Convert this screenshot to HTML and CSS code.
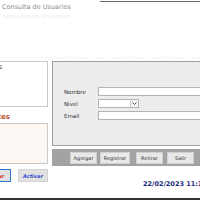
FILE: index.html
```html
<!DOCTYPE html>
<html>
<head>
<meta charset="utf-8">
<link rel="stylesheet" href="styles.css">
</head>
<body>
<div class="window">
  <div class="topline"></div>
  <div class="titlebar">
    <div class="title">Consulta de Usuarios</div>
    <div class="subtitle">Administración de usuarios</div>
  </div>
  <div class="sep"></div>
  <div class="main">
    <div class="left">
      <div class="listbox"><span class="clip">Usuario activo 1</span></div>
      <div class="caption"><span>Usuarios Pendientes</span></div>
      <div class="listbox cream"></div>
      <div class="btnrow">
        <div class="clipbtn"><button class="btn red focus">Desactivar</button></div>
        <button class="btn blue">Activar</button>
      </div>
    </div>
    <div class="right">
      <div class="panel">
        <div class="form">
          <div class="row"><label>Nombre</label><div class="input"></div></div>
          <div class="row"><label>Nivel</label><div class="select"><span class="arrow"><svg width="7" height="7" viewBox="0 0 7 7"><path d="M1.5 2.5 L3.5 4.5 L5.5 2.5" fill="none" stroke="#444" stroke-width="0.9"/></svg></span></div></div>
          <div class="row"><label>Email</label><div class="input"></div></div>
        </div>
      </div>
      <div class="toolbar">
        <button class="tbtn b1">Agregar</button>
        <button class="tbtn b2">Registrar</button>
        <button class="tbtn b3">Retirar</button>
        <button class="tbtn b4">Salir</button>
      </div>
      <div class="status">22/02/2023 11:16:05</div>
    </div>
  </div>
  <div class="bottom"></div>
</div>
</body>
</html>
```
FILE: styles.css
```css
html, body {
  margin: 0;
  padding: 0;
  background: #ffffff;
}
body {
  width: 200px;
  height: 200px;
  overflow: hidden;
  font-family: "DejaVu Sans", "Liberation Sans", sans-serif;
}
.window {
  width: 200px;
  height: 200px;
  display: flex;
  flex-direction: column;
  box-sizing: border-box;
  position: relative;
}
.topline {
  height: 1px;
  margin-top: 1px;
  margin-left: 100px;
  background: #6a6a6a;
}
.titlebar {
  height: 18px;
  padding-left: 2px;
  display: flex;
  flex-direction: column;
  padding-top: 2px;
  box-sizing: border-box;
}
.title {
  font-size: 6.5px;
  color: #8c8c8c;
  line-height: 7px;
}
.subtitle {
  font-size: 5px;
  color: #ebebeb;
  line-height: 6px;
  margin-top: 2px;
}
.sep {
  margin-top: 37px;
  height: 0;
  border-top: 1px dashed #f0f0f0;
}
.main {
  display: flex;
  gap: 4px;
  margin-top: 3px;
}
.left {
  width: 48px;
  flex-shrink: 0;
  display: flex;
  flex-direction: column;
  overflow: hidden;
}
.listbox {
  height: 46px;
  border: 1px solid #c8c8c8;
  border-left: none;
  background: #fff;
  box-sizing: border-box;
  font-size: 5px;
  color: #333;
  overflow: hidden;
}
.clip {
  display: block;
  margin-left: -38px;
  margin-top: 2px;
  white-space: nowrap;
}
.caption {
  height: 16px;
  box-sizing: border-box;
  padding-top: 3px;
  display: flex;
  justify-content: flex-end;
  align-items: center;
  overflow: hidden;
  width: 10px;
}
.caption span {
  font-size: 7px;
  font-weight: bold;
  color: #c0501f;
  white-space: nowrap;
}
.cream {
  height: 41px;
  background: #fdf8f3;
}
.btnrow {
  display: flex;
  gap: 7px;
  margin-top: 5px;
  align-items: center;
}
.clipbtn {
  width: 11px;
  display: flex;
  justify-content: flex-end;
  overflow: hidden;
  flex-shrink: 0;
}
.btn {
  height: 13px;
  font-size: 5px;
  font-family: "DejaVu Sans", sans-serif;
  padding: 0 6px;
  background: #e1e1e1;
  border: 1px solid #adadad;
  white-space: nowrap;
  flex-shrink: 0;
}
.btn.red {
  color: #d03020;
  font-style: italic;
  font-weight: bold;
}
.btn.focus {
  border: 1px solid #2a78c8;
  box-shadow: inset 0 0 0 1px #e1e1e1;
}
.btn.blue {
  color: #2f45c8;
  font-style: italic;
  font-weight: bold;
  width: 30px;
  padding: 0;
  border-color: #d4d4d4;
}
.right {
  flex: 1;
  min-width: 0;
  display: flex;
  flex-direction: column;
  overflow: hidden;
}
.panel {
  height: 85px;
  background: #ececec;
  border: 1px solid #a0a0a0;
  border-right: none;
  box-sizing: border-box;
  padding: 25px 0 0 11px;
}
.form {
  display: flex;
  flex-direction: column;
  gap: 3px;
}
.row {
  display: flex;
  align-items: center;
  height: 9px;
}
.row label {
  width: 34px;
  flex-shrink: 0;
  font-size: 5.5px;
  color: #333;
}
.input {
  flex: 1;
  height: 9px;
  background: #fff;
  border: 1px solid #b4b4b4;
  border-right: none;
  box-sizing: border-box;
}
.select {
  width: 41px;
  height: 9px;
  background: #fff;
  border: 1px solid #b4b4b4;
  box-sizing: border-box;
  display: flex;
  justify-content: flex-end;
}
.arrow {
  width: 7px;
  height: 7px;
  border-left: 1px solid #c8c8c8;
  background: #f4f4f4;
  display: flex;
}
.toolbar {
  margin-top: 3px;
  height: 17px;
  background: #a3a3a3;
  display: flex;
  align-items: center;
  padding-left: 18px;
}
.tbtn {
  height: 12px;
  font-size: 5px;
  font-family: "DejaVu Sans", sans-serif;
  background: #e8e8e8;
  border: 1px solid #d0d0d0;
  color: #333;
  padding: 0;
  width: 27px;
  flex-shrink: 0;
}
.b2 { width: 30px; margin-left: 3px; }
.b3 { margin-left: 6px; }
.b4 { margin-left: 4px; }
.status {
  margin-top: 14px;
  margin-left: 91px;
  font-size: 6.5px;
  font-weight: bold;
  color: #1a2a80;
  white-space: nowrap;
}
.bottom {
  position: absolute;
  left: 0;
  right: 0;
  bottom: 0;
  height: 2px;
  background: #333;
}
```
